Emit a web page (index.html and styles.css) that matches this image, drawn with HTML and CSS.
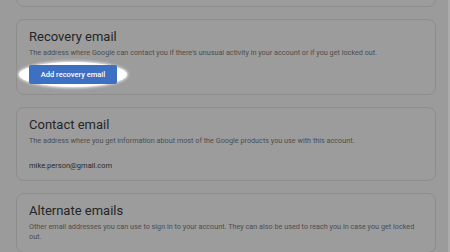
FILE: index.html
```html
<!DOCTYPE html>
<html lang="en">
<head>
    <meta charset="UTF-8">
    <meta name="viewport" content="width=device-width, initial-scale=1.0">
    <title>Email settings</title>
    <link rel="stylesheet" href="styles.css">
</head>
<body>
    <div class="page">
        <div class="cards">
            <!-- Card above, mostly scrolled away -->
            <div class="card card-top"></div>

            <div class="card">
                <h2 class="card-title">Recovery email</h2>
                <p class="card-desc">The address where Google can contact you if there's unusual activity in your account or if you get locked out.</p>
                <div class="spot">
                    <button class="add-btn">Add recovery email</button>
                </div>
            </div>

            <div class="card card-contact">
                <h2 class="card-title">Contact email</h2>
                <p class="card-desc">The address where you get information about most of the Google products you use with this account.</p>
                <p class="card-value">mike.person@gmail.com</p>
            </div>

            <div class="card">
                <h2 class="card-title">Alternate emails</h2>
                <p class="card-desc">Other email addresses you can use to sign in to your account. They can also be used to reach you in case you get locked out.</p>
            </div>
        </div>
    </div>
    <div class="scrollbar"></div>
</body>
</html>
```

FILE: styles.css
```css
/* Global Styles */
body, html {
    margin: 0;
    padding: 0;
    height: 100%;
    overflow: hidden;
    font-family: Roboto, 'Noto Sans', Arial, sans-serif;
    background-color: #9b9b9b;
}

body {
    display: flex;
}

.page {
    flex: 1;
    padding-left: 16px;
    padding-right: 12px;
}

.scrollbar {
    width: 2px;
    background-color: #ababab;
}

/* Cards */
.cards {
    display: flex;
    flex-direction: column;
    gap: 12px;
    margin-top: -34px;
}

.card {
    border: 1px solid #8d8d8d;
    border-radius: 8px;
    background-color: #9c9c9c;
    padding: 9px 12px 10px;
}

.card-top {
    height: 20px;
}

.card-contact {
    padding-bottom: 9px;
}

.card-title {
    margin: 0;
    font-size: 13px;
    line-height: 16px;
    font-weight: 400;
    color: #262626;
}

.card-desc {
    margin: 3px 0 0;
    font-size: 7.25px;
    line-height: 10px;
    color: #4e4e4e;
}

.card-value {
    margin: 15px 0 0;
    font-size: 7.5px;
    line-height: 10px;
    color: #2a2a2a;
}

/* Highlighted button */
.spot {
    position: relative;
    margin-top: 7px;
    width: 88px;
}

.spot::before {
    content: "";
    position: absolute;
    left: -10px;
    top: -3px;
    width: 108px;
    height: 25px;
    border-radius: 50%;
    background-color: #fff;
    box-shadow: 0 0 3px 1px rgba(255, 255, 255, 0.8);
}

.add-btn {
    position: relative;
    display: block;
    width: 88px;
    height: 19px;
    padding: 0;
    border: none;
    border-radius: 2px;
    background-color: #3d6fc2;
    color: #fff;
    font-family: Roboto, Arial, sans-serif;
    font-size: 7.5px;
    font-weight: 500;
}
```
